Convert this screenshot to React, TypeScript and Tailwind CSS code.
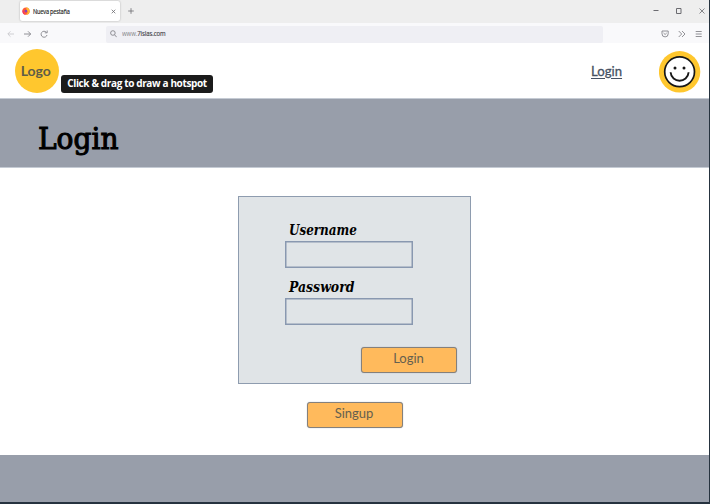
import React from "react";

function FirefoxMark() {
  return (
    <svg width="8" height="8" viewBox="0 0 8 8" className="shrink-0">
      <circle cx="4" cy="4.2" r="3.6" fill="#ff5a36" />
      <path d="M4.600 0C6.600 1 8 3 7.600 5 7 7 5.200 8 3.600 7.600 5.600 6.800 6.200 5 5 3.600 4.200 2.600 4.200 1 4.600 0Z" fill="#ffbd2e" />
      <path d="M.6 3C0 5.800 2 8 4 7.900 2.400 7 1.400 5.500 1.700 4Z" fill="#f0306b" />
      <circle cx="3.900" cy="4.100" r="1.400" fill="#8a41b8" />
    </svg>
  );
}

function TabStrip() {
  return (
    <div className="flex h-[23px] items-start bg-[#eeeeee] text-[#6b6b70]">
      <div className="ml-5 mt-px flex h-5 w-[100px] items-center rounded-[2px] bg-white pl-[2px] shadow-[0_0_2px_rgba(0,0,0,0.3)]">
        <FirefoxMark />
        <span className="ml-[2.500px] mt-px w-[60px] origin-left scale-x-[0.86] whitespace-nowrap font-['Open_Sans',sans-serif] text-[6.500px] tracking-[-0.200px] text-[#222] [-webkit-text-stroke:0.150px_#222]">
          Nueva pestaña
        </span>
        <svg width="5" height="5" viewBox="0 0 5 5" className="ml-[18px]" stroke="currentColor" strokeWidth=".8">
          <path d="M.7.7l3.600 3.600M4.300.7L.7 4.300" />
        </svg>
      </div>
      <svg width="6" height="6" viewBox="0 0 6 6" className="ml-[7.500px] mt-2" stroke="currentColor" strokeWidth=".8">
        <path d="M3 .2v5.600M.2 3h5.600" />
      </svg>
      <div className="ml-auto mr-1 mt-2 flex w-[52px] items-center justify-between">
        <svg width="6" height="6" viewBox="0 0 6 6" stroke="currentColor">
          <path d="M.5 2.500h5" />
        </svg>
        <svg width="6" height="6" viewBox="0 0 6 6" fill="none" stroke="currentColor">
          <path d="M.5.5h4.500v5H.5z" />
        </svg>
        <svg width="6" height="6" viewBox="0 0 6 6" stroke="currentColor" strokeWidth=".8">
          <path d="M.5.5l5 5M5.500.5l-5 5" />
        </svg>
      </div>
    </div>
  );
}

function Toolbar() {
  return (
    <div className="flex h-5 items-center bg-[#f9f9fb] text-[#77777d]">
      <svg width="42" height="8" viewBox="0 0 42 8" className="ml-[7px] mt-[2px]" fill="none" stroke="currentColor" strokeWidth=".8">
        <path d="M7 4H1M3.500 1.300L.8 4l2.700 2.700" stroke="#c5c5ca" />
        <path d="M17 4h6.500M21 1.300L23.700 4 21 6.700" />
        <path d="M39.300 2.200A3 3 0 1 0 40 5M40.200.5v2.300h-2.400" />
      </svg>
      <div className="ml-[57px] mt-[2px] flex h-[17px] w-[497px] items-center rounded-[2px] bg-[#efeff4] pl-1">
        <svg width="7" height="8" viewBox="0 0 7 8" fill="none" stroke="currentColor" strokeWidth=".8">
          <circle cx="2.900" cy="3" r="2.300" />
          <path d="M4.600 4.800L6.700 7.200" />
        </svg>
        <span className="ml-[4.500px] mt-px origin-left scale-x-[0.86] whitespace-nowrap font-['Open_Sans',sans-serif] text-[7px] tracking-[-0.100px] text-[#858589]">
          www.<span className="text-[#404044] [-webkit-text-stroke:0.150px_#404044]">7islas.com</span>
        </span>
      </div>
      <svg width="41" height="8" viewBox="0 0 41 8" className="ml-auto mr-[7px] mt-[2px]" fill="none" stroke="currentColor" strokeWidth=".8">
        <path d="M1 1h6.200v2.800a3.100 3.100 0 0 1-6.200 0zM2.500 3l1.600 1.500L5.700 3" />
        <path d="M17.700 1l3 3-3 3M21 1l3 3-3 3" />
        <path d="M34.700 1.500h6M34.700 4h6M34.700 6.500h6" />
      </svg>
    </div>
  );
}

function Smiley() {
  return (
    <svg width="42" height="42" viewBox="0 0 42 42" className="shrink-0">
      <circle cx="20.600" cy="20.800" r="20.700" fill="#ffc72e" />
      <circle cx="20.600" cy="20.800" r="14.900" fill="#fff" stroke="#171717" strokeWidth="1.700" />
      <circle cx="16" cy="17" r="1.500" fill="#171717" />
      <circle cx="25" cy="17" r="1.500" fill="#171717" />
      <path d="M11.600 21.300c.8 11.200 17.200 11.200 18 0" fill="none" stroke="#171717" strokeWidth="1.900" />
    </svg>
  );
}

function Header() {
  return (
    <header className="relative flex h-[55px] items-center bg-white font-[Lato,sans-serif]">
      <div className="ml-[15px] mt-px flex size-[43.500px] items-center justify-center rounded-full bg-[#ffc72e] pb-px pr-[2px] text-[14px] font-bold text-[#5f5d47]">
        Logo
      </div>
      <a className="-mt-px ml-auto w-[31px] origin-left scale-x-[0.94] text-[14px] text-[#465263] underline [-webkit-text-stroke:0.300px_#465263] [text-underline-offset:2px]">
        Login
      </a>
      <div className="ml-[37px] mr-2 mt-[3px]">
        <Smiley />
      </div>
      <div className="absolute left-[61px] top-8 flex h-[18px] w-[152px] items-center justify-center whitespace-nowrap rounded-[3px] bg-[#1b1b1b] pb-px font-['Open_Sans',sans-serif] text-[10px] font-bold tracking-[-0.360px] text-white">
        Click &amp; drag to draw a hotspot
      </div>
    </header>
  );
}

function Field({ label, labelClass }: { label: string; labelClass: string }) {
  return (
    <label className="block h-[57px] w-32">
      <span
        className={`ml-1 block h-[18px] w-max origin-left font-['DejaVu_Serif',serif] text-[14px] font-bold italic leading-[15px] text-black ${labelClass}`}
      >
        {label}
      </span>
      <span className="block h-[27px] border border-[#8998b0] shadow-[inset_0_0_0_0.500px_#8998b0]" />
    </label>
  );
}

function Button({ children }: { children: React.ReactNode }) {
  return (
    <button className="flex h-[26px] w-24 items-center justify-center rounded-[3px] border border-[#85807b] bg-[#ffba5c] pb-[3px] pr-px font-[Lato,sans-serif] text-[13px] text-[#65604f] shadow-[0_0_1px_#8998b0]">
      {children}
    </button>
  );
}

export default function App() {
  return (
    <div className="flex h-[504px] w-[710px] flex-col overflow-hidden border-b-2 border-r border-[#26333f] bg-white">
      <TabStrip />
      <Toolbar />
      <Header />
      <section className="h-[70px] border-y border-[#c5cbd4] bg-[#989eaa] pl-[38px] pt-5">
        <h1 className="w-max origin-left scale-x-[0.95] font-['DejaVu_Serif',serif] text-[29.500px] leading-[40px] text-black [-webkit-text-stroke:1.100px_black]">
          Login
        </h1>
      </section>
      <main className="flex h-[287px] flex-col items-center pt-7">
        <form className="flex h-[188px] w-[233px] flex-col border border-[#8e9caf] bg-[#e0e4e7] pl-[46px] pt-[26px]">
          <Field label="Username" labelClass="scale-x-[0.855]" />
          <Field label="Password" labelClass="scale-x-[0.89]" />
          <div className="ml-[76px] mt-[10px]">
            <Button>Login</Button>
          </div>
        </form>
        <div className="mt-[18px]">
          <Button>Singup</Button>
        </div>
      </main>
      <footer className="h-[47px] bg-[#989eaa]" />
    </div>
  );
}
